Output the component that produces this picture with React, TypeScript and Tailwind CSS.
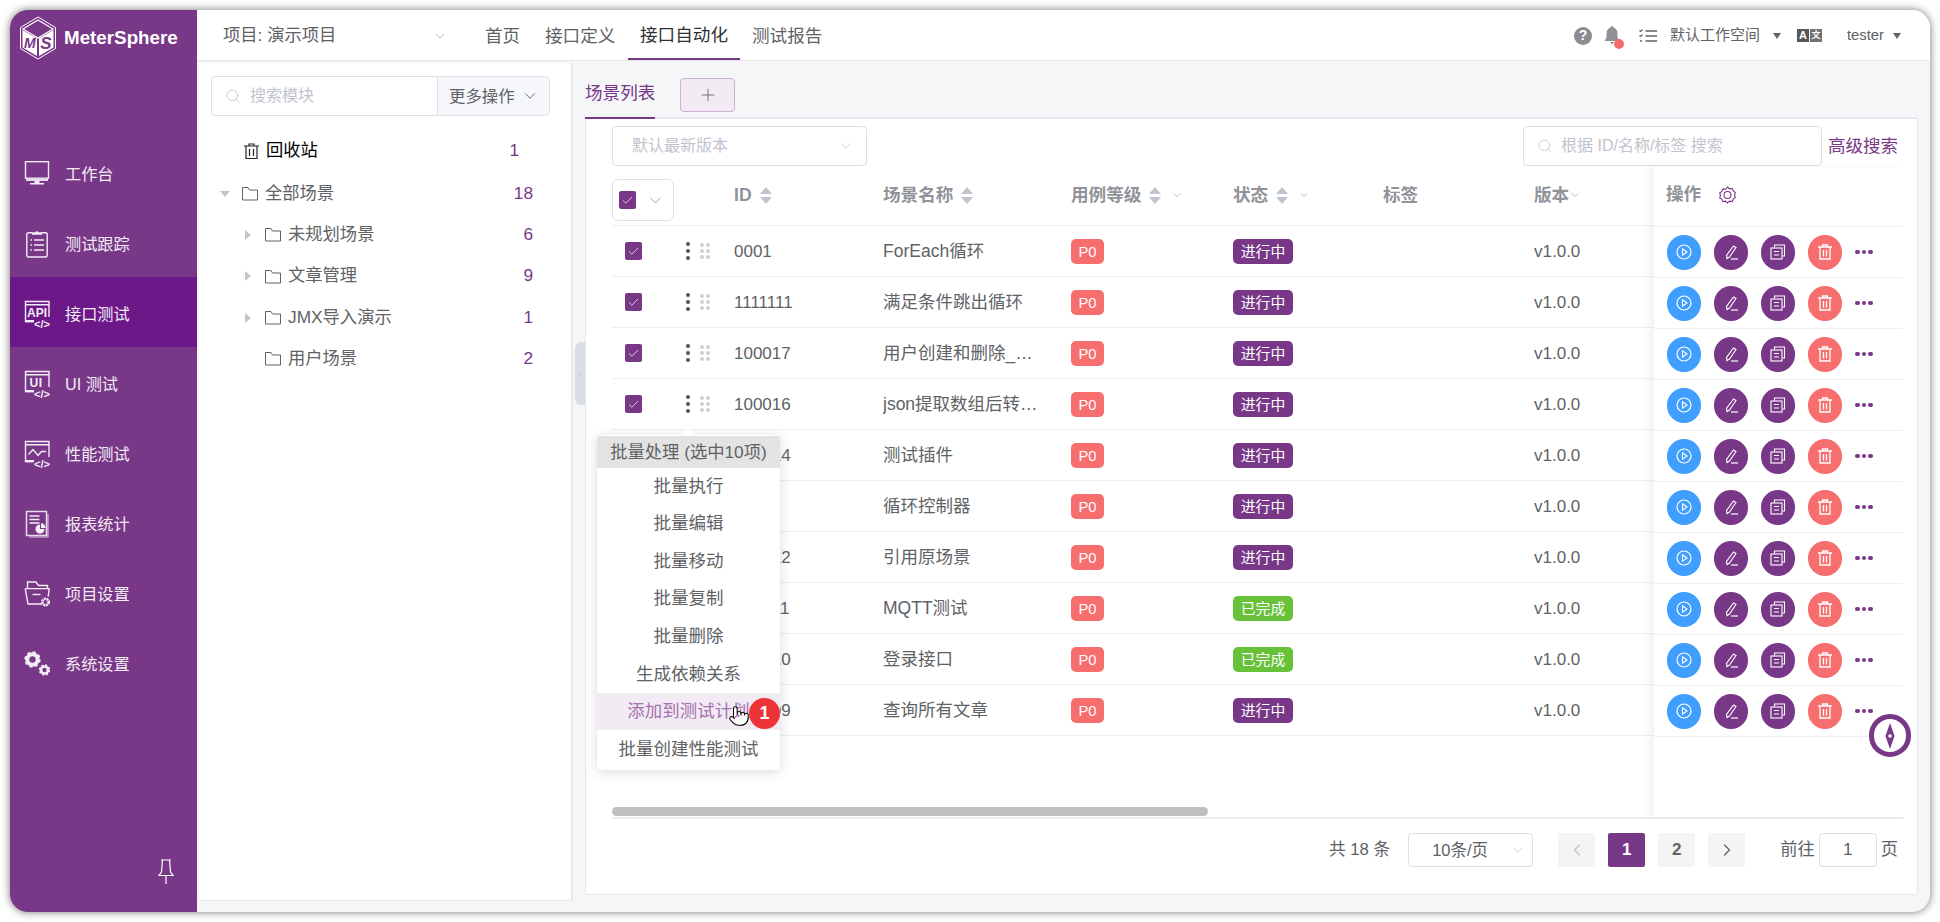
import React from "react";
import { ChevronDown, ChevronLeft, ChevronRight, Search, Plus, Pointer, Check } from "lucide-react";

const S = { fill: "none", stroke: "currentColor", strokeWidth: 1.4 } as const;

function Code({ y }: { y: number }) {
  return (
    <text x="18" y={y} textAnchor="middle" fontSize="11" fontWeight="700" fill="currentColor" fontFamily="Liberation Sans, sans-serif">
      {"</>"}
    </text>
  );
}

function NavIcon({ name }: { name: string }) {
  let c: React.ReactNode = null;
  if (name === "monitor")
    c = (
      <>
        <rect x="1.5" y="1.7" width="23" height="16.5" {...S} />
        <path d="M2 19h22v2H2z" fill="currentColor" opacity=".9" />
        <path d="M10.5 21h5v2h-5zM6 23h14v1.4H6z" fill="currentColor" />
      </>
    );
  if (name === "clip")
    c = (
      <>
        <path d="M8 2.8H4.2a1.4 1.4 0 0 0-1.4 1.4v21.4A1.4 1.4 0 0 0 4.2 27h17.6a1.4 1.4 0 0 0 1.4-1.4V4.2a1.4 1.4 0 0 0-1.4-1.4H18" {...S} />
        <path d="M8 4.8V2.3h3.4a1.7 1.7 0 0 1 3.2 0H18v2.5z" fill="currentColor" />
        <path d="M6.5 10h1.5M10 10h10M6.5 15h1.5M10 15h10M6.500 20h1.500M10 20h10" {...S} />
      </>
    );
  if (name === "api" || name === "ui" || name === "perf")
    c = (
      <>
        <path d="M25 17V1.500H1.500v20H10M1.500 4.800H25" {...S} />
        <path d="M1.500 20h8.500v2.200H1.500z" fill="currentColor" />
        {name === "api" && (
          <text x="13" y="16.500" textAnchor="middle" fontSize="12" fontWeight="700" fill="currentColor" fontFamily="Liberation Sans, sans-serif">
            API
          </text>
        )}
        {name === "ui" && (
          <text x="12" y="16.500" textAnchor="middle" fontSize="12" fontWeight="700" fill="currentColor" fontFamily="Liberation Sans, sans-serif" letterSpacing=".5">
            UI
          </text>
        )}
        {name === "perf" && <path d="M4.500 14.500l4.500-5 5 6 3.500-4h4.500" {...S} />}
        <Code y={27.500} />
      </>
    );
  if (name === "report")
    c = (
      <>
        <path d="M24 4v23H5" fill="none" stroke="currentColor" strokeWidth="1.2" opacity=".75" />
        <rect x="2.5" y="1.5" width="20" height="24" fill="none" stroke="currentColor" strokeWidth="1.5" opacity=".9" />
        <path d="M5.5 6h10M5.5 9.5h10M5.5 13h10" fill="none" stroke="currentColor" strokeWidth="1.4" />
        <path d="M16 14.5a4.6 4.6 0 1 0 4.6 4.6H16z" fill="currentColor" />
        <path d="M17 13.3v4.6h4.6a4.6 4.6 0 0 0-4.6-4.6z" fill="currentColor" />
      </>
    );
  if (name === "folder")
    c = (
      <>
        <path d="M3.5 8V2h8.5l2.5 3.5h9V9" {...S} />
        <path d="M1.2 8.6h24l-1 8M18 24H4L1.2 8.6" {...S} />
        <path d="M8.5 14.5h8" {...S} />
        <circle cx="21.5" cy="22" r="3.2" fill="none" stroke="currentColor" strokeWidth="2.6" strokeDasharray="2 .6" />
      </>
    );
  if (name === "gears")
    c = (
      <>
        <circle cx="8.5" cy="9.5" r="5.2" fill="none" stroke="currentColor" strokeWidth="4" />
        <circle cx="8.5" cy="9.5" r="7.2" fill="none" stroke="currentColor" strokeWidth="2" strokeDasharray="3 2.65" />
        <circle cx="20.5" cy="20" r="3.5" fill="none" stroke="currentColor" strokeWidth="2.6" />
        <circle cx="20.5" cy="20" r="5" fill="none" stroke="currentColor" strokeWidth="1.5" strokeDasharray="2.2 1.72" />
      </>
    );
  return (
    <svg width="26" height="28" viewBox="0 0 26 28">
      {c}
    </svg>
  );
}

const navItems = [
  ["monitor", "工作台"],
  ["clip", "测试跟踪"],
  ["api", "接口测试"],
  ["ui", "UI 测试"],
  ["perf", "性能测试"],
  ["report", "报表统计"],
  ["folder", "项目设置"],
  ["gears", "系统设置"],
];

function Logo() {
  return (
    <svg width="38" height="44" viewBox="0 0 38 44">
      <path d="M19 1l17.500 10.500v21L19 43 1.500 32.500v-21z" fill="none" stroke="#fff" strokeWidth="1" />
      <path d="M19 4l15 9-15 9-15-9z" fill="#783887" stroke="#fff" strokeWidth="1.200" />
      <path d="M3.500 14l14.500 8.500V40L3.500 31.500z" fill="#fff" />
      <path d="M20 22.500L34.500 14v17.500L20 40z" fill="#fff" />
      <text x="10.800" y="32" textAnchor="middle" fontSize="14" fontWeight="700" fontStyle="italic" fill="#783887" fontFamily="Liberation Sans, sans-serif">M</text>
      <text x="27" y="33" textAnchor="middle" fontSize="17" fontWeight="700" fontStyle="italic" fill="#783887" fontFamily="Liberation Sans, sans-serif">S</text>
    </svg>
  );
}

function Sidebar() {
  return (
    <aside className="w-[187px] shrink-0 bg-[#783887] flex flex-col text-[#f3ecf5]">
      <div className="h-[127px] shrink-0 flex items-start pl-[9px] pt-[6px]">
        <Logo />
        <span className="ml-[7px] mt-[10px] text-[18.800px] leading-[24px] font-bold text-white">MeterSphere</span>
      </div>
      {navItems.map(([k, label]) => (
        <div key={k} className={`h-[70px] flex items-center pl-[14px] pt-[4px] ${k === "api" ? "bg-[#6c1889]" : ""}`}>
          <NavIcon name={k} />
          <span className="ml-[15px] text-[16.200px]">{label}</span>
        </div>
      ))}
      <div className="flex-1 flex items-end justify-end pr-[23px] pb-[27px]">
        <svg width="16" height="26" viewBox="0 0 16 26" fill="none" stroke="#fff" strokeWidth="1.200">
          <path d="M3 1h10M4.500 1l-1 12L1 16.500h14L12.500 13l-1-12M8 16.500V25" />
        </svg>
      </div>
    </aside>
  );
}

function Caret({ className = "" }: { className?: string }) {
  return <span className={`inline-block w-0 h-0 border-x-[4.500px] border-x-transparent border-t-[6px] border-t-[#606266] ${className}`} />;
}

function TopBar() {
  return (
    <header className="h-[51px] shrink-0 bg-white border-b border-[#e6e6e6] flex items-stretch text-[#606266]">
      <div className="w-[288px] pl-[26px] pt-[2px] flex items-center text-[17.300px]">
        <span className="w-[209px]">项目: 演示项目</span>
        <ChevronDown size={16} strokeWidth={1} className="text-[#909399]" />
      </div>
      <nav className="flex text-[17.600px] text-[#606266]">
        <span className="flex items-center pt-[2px] w-[60px]">首页</span>
        <span className="flex items-center pt-[2px] w-[83px]">接口定义</span>
        <span className="flex items-center pt-[2px] px-[12px] text-[#303133] border-b-2 border-[#783887] h-[50px] -mb-[1px]">接口自动化</span>
        <span className="flex items-center pt-[2px] pl-[12px]">测试报告</span>
      </nav>
      <div className="ml-auto flex items-center pr-[29px] pt-[1px]">
        <span className="w-[18px] h-[18px] rounded-full bg-[#8a8c91] text-white text-[14px] font-bold flex items-center justify-center">?</span>
        <span className="relative ml-[12px] w-[16px] h-[19px]">
          <svg width="16" height="19" viewBox="0 0 16 19"><path d="M8 0a1.500 1.500 0 0 1 1.500 1.500C12.500 2.300 13.500 5 13.500 8v3.500L15.500 15H.5l2-3.500V8c0-3 1-5.700 4-6.500A1.500 1.500 0 0 1 8 0zM6 16h4l-2 2.500z" fill="#8f9196" /></svg>
          <span className="absolute left-[10px] top-[13px] w-[10px] h-[10px] rounded-full bg-[#f56c6c]" />
        </span>
        <svg className="ml-[19px]" width="18" height="14" viewBox="0 0 18 14" fill="none" stroke="#5f6166" strokeWidth="1.600">
          <path d="M6.500 2H18M6.500 7H18M6.500 12H18" />
          <path d="M.5 1.500l1 1 2-2M.5 6.500l1 1 2-2" strokeWidth="1.200" />
          <circle cx="2" cy="12" r="1" fill="#5f6166" stroke="none" />
        </svg>
        <span className="ml-[13px] text-[15px]">默认工作空间</span>
        <Caret className="ml-[13px]" />
        <span className="ml-[16px] flex gap-[1px] text-white text-[11px] font-bold leading-[13px]">
          <span className="w-[12px] h-[13px] bg-[#55575b] text-center">A</span>
          <span className="w-[12px] h-[13px] bg-[#707276] text-center text-[9px]">文</span>
        </span>
        <span className="ml-[25px] text-[14.800px]">tester</span>
        <Caret className="ml-[9px]" />
      </div>
    </header>
  );
}

function FolderIcon() {
  return (
    <svg width="16" height="15" viewBox="0 0 16 15" fill="none" stroke="#606266" strokeWidth="1">
      <path d="M.5 1.500h5.500l1.500 2.500h8v10H.5z" />
    </svg>
  );
}

function TriRight() {
  return <span className="w-0 h-0 border-y-[5px] border-y-transparent border-l-[6px] border-l-[#c0c4cc]" />;
}

function TreeRow({ pad, caret, label, n }: { pad: number; caret?: "right" | "down"; label: string; n: string }) {
  return (
    <div className="h-[41.300px] flex items-center text-[17.300px] text-[#606266] pr-[38px]" style={{ paddingLeft: pad }}>
      <span className="w-[20px] flex items-center">
        {caret === "right" && <TriRight />}
        {caret === "down" && <span className="w-0 h-0 border-x-[5px] border-x-transparent border-t-[6px] border-t-[#c0c4cc] -ml-[2px]" />}
      </span>
      <FolderIcon />
      <span className="ml-[7px]">{label}</span>
      <span className="ml-auto text-[#783887] text-[17.300px]">{n}</span>
    </div>
  );
}

function LeftPanel() {
  return (
    <section className="w-[374px] ml-[2px] mt-[2px] mb-[11px] bg-white border-r-2 border-b border-[#e6e8ec] pt-[13px] shrink-0">
      <div className="mx-[12px] h-[40px] border border-[#dcdfe6] rounded-[4px] flex text-[16px] w-[339px]">
        <div className="flex-1 flex items-center pl-[13px] text-[#c0c4cc]">
          <Search size={16} strokeWidth={1.300} />
          <span className="ml-[9px]">搜索模块</span>
        </div>
        <div className="w-[112px] bg-[#f5f7fa] border-l border-[#dcdfe6] rounded-r-[4px] flex items-center pl-[11px] text-[#606266] text-[16.400px]">
          更多操作
          <ChevronDown size={18} strokeWidth={1.200} className="ml-[6px]" />
        </div>
      </div>
      <div className="mt-[14px] h-[42px] flex items-center pl-[45px] pr-[52px] text-[17.300px] text-black">
        <svg width="15" height="16" viewBox="0 0 15 16" fill="none" stroke="#222" strokeWidth="1.200">
          <path d="M0 3h15M5 3V1h5v2M2 3v12.500h11V3M5.500 6v7M9.500 6v7" />
        </svg>
        <span className="ml-[7px]">回收站</span>
        <span className="ml-auto text-[#783887]">1</span>
      </div>
      <div className="pt-[1px]">
        <TreeRow pad={23} caret="down" label="全部场景" n="18" />
        <TreeRow pad={46} caret="right" label="未规划场景" n="6" />
        <TreeRow pad={46} caret="right" label="文章管理" n="9" />
        <TreeRow pad={46} caret="right" label="JMX导入演示" n="1" />
        <TreeRow pad={46} label="用户场景" n="2" />
      </div>
    </section>
  );
}

function Box({ className = "" }: { className?: string }) {
  return (
    <span className={`w-[17px] h-[18px] rounded-[2px] bg-[#783887] flex items-center justify-center text-white ${className}`}>
      <Check size={13} strokeWidth={1.300} />
    </span>
  );
}

function Sort() {
  return (
    <span className="inline-flex flex-col gap-[3px] ml-[8px]">
      <span className="w-0 h-0 border-x-[6px] border-x-transparent border-b-[7px] border-b-[#c0c4cc]" />
      <span className="w-0 h-0 border-x-[6px] border-x-transparent border-t-[7px] border-t-[#c0c4cc]" />
    </span>
  );
}

const rows: [string, string, string][] = [
  ["0001", "ForEach循环", "进行中"],
  ["1111111", "满足条件跳出循环", "进行中"],
  ["100017", "用户创建和删除_场景", "进行中"],
  ["100016", "json提取数组后转换格式", "进行中"],
  ["100014", "测试插件", "进行中"],
  ["1003", "循环控制器", "进行中"],
  ["100012", "引用原场景", "进行中"],
  ["100011", "MQTT测试", "已完成"],
  ["100010", "登录接口", "已完成"],
  ["100009", "查询所有文章", "进行中"],
];

const cols = "grid grid-cols-[73px_49px_149px_188px_162px_150px_151px_120px]";

function TableLeft() {
  return (
    <div className="w-[1042px] shrink-0 flex flex-col">
      <div className={`${cols} h-[60px] border-b border-[#ebeef5] text-[17.600px] font-bold text-[#909399] items-center`}>
        <div className="col-span-2 -mb-[9px]">
          <div className="w-[62px] h-[42px] border border-[#dcdfe6] rounded-[6px] bg-white flex items-center pl-[6px]">
            <Box />
            <ChevronDown size={19} strokeWidth={1.100} className="ml-[10px] text-[#909399]" />
          </div>
        </div>
        <div className="flex items-center">ID<Sort /></div>
        <div className="flex items-center">场景名称<Sort /></div>
        <div className="flex items-center">用例等级<Sort /><ChevronDown size={12} strokeWidth={1.200} className="ml-[10px]" /></div>
        <div className="flex items-center">状态<Sort /><ChevronDown size={12} strokeWidth={1.200} className="ml-[10px]" /></div>
        <div>标签</div>
        <div className="flex items-center">版本<ChevronDown size={12} strokeWidth={1.200} /></div>
      </div>
      {rows.map(([id, name, st]) => (
        <div key={id} className={`${cols} h-[51px] border-b border-[#ebeef5] items-center text-[17.500px] text-[#606266]`}>
          <div className="pl-[13px]"><Box /></div>
          <div className="pl-[1px] flex items-center gap-[10px]">
            <span className="flex flex-col gap-[3px]">
              {[0, 1, 2].map((i) => <span key={i} className="w-[4px] h-[4px] rounded-full bg-[#555]" />)}
            </span>
            <span className="grid grid-cols-2 gap-[2px]">
              {[0, 1, 2, 3, 4, 5].map((i) => <span key={i} className="w-[4px] h-[4px] rounded-full bg-[#cfcfcf]" />)}
            </span>
          </div>
          <div className="pt-[1px] text-[17px]">{id}</div>
          <div className="pt-[1px]"><div className="max-w-[156px] truncate">{name}</div></div>
          <div><span className="inline-flex items-center justify-center w-[33px] h-[25px] rounded-[5px] bg-[#f76e6e] text-white text-[14.800px]">P0</span></div>
          <div><span className={`inline-flex items-center justify-center w-[60px] h-[25px] rounded-[5px] text-white text-[14.800px] ${st === "已完成" ? "bg-[#67c23a]" : "bg-[#783887]"}`}>{st}</span></div>
          <div />
          <div className="pt-[1px] text-[17px]">v1.0.0</div>
        </div>
      ))}
      <div className="mt-auto mb-[1px] w-[596px] h-[9px] rounded-[5px] bg-[#bfbfbf]" />
    </div>
  );
}

function Act({ color, children }: { color: string; children: React.ReactNode }) {
  return (
    <span className="w-[34px] h-[35px] rounded-full flex items-center justify-center text-white" style={{ background: color }}>
      <svg width="18" height="18" viewBox="0 0 18 18" fill="none" stroke="currentColor" strokeWidth="1.100">{children}</svg>
    </span>
  );
}

function TableRight() {
  return (
    <div className="w-[249px] shrink-0 bg-white mt-[1px] shadow-[-5px_0_8px_rgba(0,0,0,0.05)] flex flex-col">
      <div className="h-[60px] border-b border-[#ebeef5] flex items-center pl-[12px] text-[17.600px] font-bold text-[#909399]">
        <span className="-mt-[4px]">操作</span>
        <svg className="ml-[18px] -mt-[4px]" width="17" height="18" viewBox="0 0 17 18" fill="none" stroke="#783887" strokeWidth="1.100">
          <path d="M8.500 1l2 1.800 2.700-.4 1 2.500 2.100 1.600-.8 2.500.8 2.500-2.100 1.600-1 2.500-2.700-.4-2 1.800-2-1.800-2.700.4-1-2.500L.7 12l.8-2.500L.7 7l2.100-1.600 1-2.500 2.700.4z" />
          <circle cx="8.500" cy="9" r="3.500" />
        </svg>
      </div>
      {rows.map(([id]) => (
        <div key={id} className="h-[51px] border-b border-[#ebeef5] flex items-center pl-[13px] gap-[13px]">
          <Act color="#409eff"><circle cx="9" cy="9" r="7" strokeWidth="1.200" /><path d="M7.500 5.800L12 9l-4.500 3.200z" /></Act>
          <Act color="#783887"><path d="M4.500 12.500L5 15.500l2.500-1.500L14 4.500 11.500 3z" /><path d="M9 16h7" strokeWidth="1.200" /></Act>
          <Act color="#783887"><path d="M5.500 4.500V2h10v11h-2" /><rect x="2" y="5" width="11" height="11" /><path d="M5 8.500h5M5 12h5" /></Act>
          <Act color="#f76e6e"><path d="M2 4h14M6.500 4V2h5v2M4 4v12h10V4M7.500 7v6.500M10.500 7v6.500" strokeWidth="1.300" /></Act>
          <span className="flex gap-[2px]">
            {[0, 1, 2].map((i) => <span key={i} className="w-[4.500px] h-[4.500px] rounded-full bg-[#783887]" />)}
          </span>
        </div>
      ))}
    </div>
  );
}

function Pager() {
  const btn = "w-[37px] h-[34px] rounded-[2px] flex items-center justify-center bg-[#f4f4f5] text-[17px] font-bold";
  return (
    <div className="flex items-center justify-end pr-[6px] pt-[14px] text-[#606266] text-[17.300px]">
      <span className="text-[16.700px]">共 18 条</span>
      <div className="ml-[18px] w-[125px] h-[34px] border border-[#dcdfe6] rounded-[4px] flex items-center pl-[23px] text-[16.500px]">
        <span>10条/页</span>
        <ChevronDown size={16} strokeWidth={1} className="ml-[22px] text-[#c0c4cc]" />
      </div>
      <div className="ml-[25px] flex gap-[13px]">
        <span className={`${btn} text-[#c0c4cc]`}><ChevronLeft size={20} strokeWidth={1.500} /></span>
        <span className={`${btn} !bg-[#783887] text-white`}>1</span>
        <span className={btn}>2</span>
        <span className={btn}><ChevronRight size={20} strokeWidth={1.500} /></span>
      </div>
      <span className="ml-[35px]">前往</span>
      <span className="ml-[4px] w-[58px] h-[34px] border border-[#dcdfe6] rounded-[4px] flex items-center justify-center">1</span>
      <span className="ml-[4px]">页</span>
    </div>
  );
}

function Menu() {
  const items = ["批量执行", "批量编辑", "批量移动", "批量复制", "批量删除", "生成依赖关系", "添加到测试计划", "批量创建性能测试"];
  return (
    <div className="absolute left-[11px] top-[316px] w-[183px] h-[335px] bg-white rounded-[4px] shadow-[0_2px_12px_rgba(0,0,0,0.15)] text-[17.500px] text-[#606266] text-center">
      <span className="absolute left-[83px] -top-[8px] w-0 h-0 border-x-[8px] border-x-transparent border-b-[8px] border-b-white" />
      <div className="h-[32px] mt-[1px] bg-[#e3e3e3] flex items-center justify-center text-[17.300px] rounded-t-[2px] whitespace-nowrap leading-[32px]">批量处理 (选中10项)</div>
      <div className="-mt-[1px]">
        {items.map((t) => (
          <div key={t} className={`h-[37.600px] flex items-center justify-center ${t === "添加到测试计划" ? "bg-[#f2ebf3] text-[#a571b0] relative" : ""}`}>{t}</div>
        ))}
      </div>
      <Pointer className="absolute left-[131px] top-[270px] text-black" size={22} fill="#fff" strokeWidth={1.100} />
      <span className="absolute left-[152px] top-[263px] w-[31px] h-[31px] rounded-full bg-[#ee3338] text-white font-bold text-[18px] flex items-center justify-center">1</span>
    </div>
  );
}

function Main() {
  return (
    <section className="flex-1 ml-[12px] mr-[12px] pt-[17px] pb-[17px] flex flex-col min-w-0">
      <div className="h-[41px] shrink-0 border-b-2 border-[#e4e7ed] flex items-start">
        <span className="h-[41px] border-b-2 border-[#783887] text-[#783887] text-[17.600px] leading-[30px]">场景列表</span>
        <span className="ml-[25px] w-[55px] h-[34px] rounded-[4px] border border-[#cbb0d1] bg-[#f2ebf3] flex items-center justify-center text-[#606266]">
          <Plus size={20} strokeWidth={1} />
        </span>
      </div>
      <div className="relative flex-1 bg-white border border-[#e4e7ed] border-t-0 rounded-b-[4px] pl-[26px] pr-[13px]">
        <div className="pt-[7px] h-[47px] flex items-center justify-between text-[16px] pr-[6px]">
          <div className="w-[255px] h-[40px] border border-[#dcdfe6] rounded-[4px] flex items-center pl-[19px] pr-[11px] text-[#c0c4cc]">
            默认最新版本
            <ChevronDown size={18} strokeWidth={1} className="ml-auto" />
          </div>
          <div className="flex items-center gap-[6px]">
            <div className="w-[299px] h-[40px] border border-[#dcdfe6] rounded-[4px] flex items-center pl-[13px] text-[#c0c4cc]">
              <Search size={16} strokeWidth={1.200} />
              <span className="ml-[8px]">根据 ID/名称/标签 搜索</span>
            </div>
            <span className="text-[#783887] text-[17.500px]">高级搜索</span>
          </div>
        </div>
        <div className="flex h-[653px] border-b-2 border-[#ebeef5]">
          <TableLeft />
          <TableRight />
        </div>
        <Pager />
        <Menu />
        <div className="absolute left-[1283px] top-[595px] w-[42px] h-[43px] rounded-full border-[5px] border-[#783887] bg-white flex items-center justify-center">
          <svg width="10" height="26" viewBox="0 0 10 26"><path d="M5 0l4.500 13L5 26 .5 13z" fill="#783887" /><circle cx="5" cy="13" r="1.800" fill="#fff" /></svg>
        </div>
      </div>
    </section>
  );
}

export default function App() {
  return (
    <div className="w-[1940px] h-[922px] bg-white p-[10px] overflow-hidden font-['Liberation_Sans','Noto_Sans_CJK_SC',sans-serif]">
      <div className="w-[1920px] h-[902px] rounded-[18px] overflow-hidden flex shadow-[0_0_9px_rgba(0,0,0,0.55)] bg-[#f5f6f8]">
        <Sidebar />
        <div className="flex-1 flex flex-col min-w-0">
          <TopBar />
          <div className="relative flex-1 flex min-h-0">
            <LeftPanel />
            <div className="absolute left-[378px] top-[281px] w-[10px] h-[63px] rounded-l-[6px] bg-[#d9dee4] flex items-center justify-center text-[#a8adb5]">
              <ChevronLeft size={14} strokeWidth={1} />
            </div>
            <Main />
          </div>
        </div>
      </div>
    </div>
  );
}
